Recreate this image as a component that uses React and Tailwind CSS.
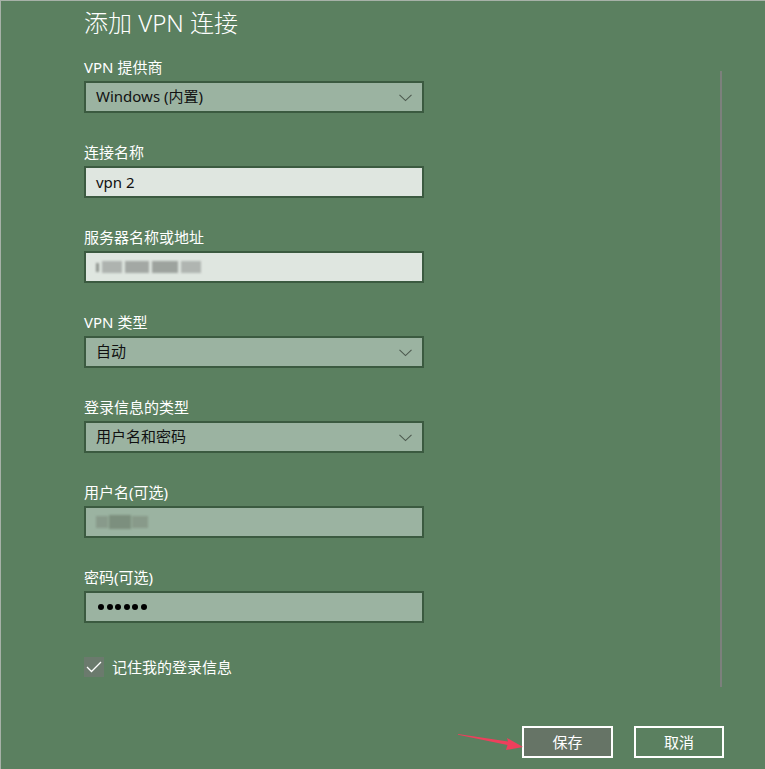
import React from "react";

const FONT = { fontFamily: '"Segoe UI", "Noto Sans", "Noto Sans CJK SC", sans-serif' };

function Chevron() {
  return (
    <svg width="13" height="8" viewBox="0 0 13 8" className="absolute right-[10px] top-[11px]">
      <polyline points="0.5,0.8 6.5,6.6 12.5,0.8" fill="none" stroke="#4d5a4f" strokeWidth="1.1" />
    </svg>
  );
}

function Field({ label, children, first }) {
  return (
    <div className={first ? "" : "mt-[30px]"}>
      <div className="h-5 leading-[18px] text-[15px] text-white">{label}</div>
      <div className="mt-[3px]">{children}</div>
    </div>
  );
}

function Select({ value }) {
  return (
    <div className="relative h-[32px] w-[340px] border-2 border-[#3b5a40] bg-[#9bb3a1] pl-[10px] text-[15px] leading-[27px] text-[#111]">
      {value}
      <Chevron />
    </div>
  );
}

function Input({ children, light }) {
  return (
    <div
      className={
        "relative flex h-[32px] w-[340px] items-center border-2 border-[#3b5a40] pl-[10px] text-[15px] leading-[27px] text-[#111] " +
        (light ? "bg-[#dfe6e0]" : "bg-[#9bb3a1]")
      }
    >
      {children}
    </div>
  );
}

export default function App() {
  return (
    <div
      style={FONT}
      className="relative h-[769px] w-[765px] overflow-hidden border-l border-t border-[#a7b1a8] bg-[#5b8060]"
    >
      <div className="pl-[83px] pt-[6px]">
        <div className="h-[32px] text-[24px] font-light leading-[31px] text-white">添加 VPN 连接</div>
        <div className="mt-[19px]">
          <Field label="VPN 提供商" first>
            <Select value="Windows (内置)" />
          </Field>
          <Field label="连接名称">
            <Input light>vpn 2</Input>
          </Field>
          <Field label="服务器名称或地址">
            <Input light>
              <div className="flex items-center gap-[3px] blur-[1.2px]">
                <div className="h-[9px] w-[3px] bg-[#8f948f]" />
                <div className="h-[12px] w-[20px] bg-[#aeb3af]" />
                <div className="h-[12px] w-[24px] bg-[#a3a8a4]" />
                <div className="h-[12px] w-[26px] bg-[#9da39e]" />
                <div className="h-[12px] w-[20px] bg-[#b0b5b1]" />
              </div>
            </Input>
          </Field>
          <Field label="VPN 类型">
            <Select value="自动" />
          </Field>
          <Field label="登录信息的类型">
            <Select value="用户名和密码" />
          </Field>
          <Field label="用户名(可选)">
            <Input>
              <div className="flex items-center gap-[1px] blur-[1.2px]">
                <div className="h-[12px] w-[12px] bg-[#889a8b]" />
                <div className="h-[14px] w-[22px] bg-[#7c8f7e]" />
                <div className="h-[12px] w-[16px] bg-[#889a8a]" />
              </div>
            </Input>
          </Field>
          <Field label="密码(可选)">
            <Input>
              <div className="flex items-center gap-[2.5px] pl-[2px]">
                {[0, 1, 2, 3, 4, 5].map((i) => (
                  <span key={i} className="block h-[6px] w-[6px] rounded-full bg-black" />
                ))}
              </div>
            </Input>
          </Field>
        </div>

        <div className="mt-[34px] flex items-center gap-[8px]">
          <div className="flex h-[20px] w-[20px] items-center justify-center bg-[#6b7a6d]">
            <svg width="16" height="12" viewBox="0 0 16 12">
              <polyline points="1,6 5.5,10.5 15,1" fill="none" stroke="#ffffff" strokeWidth="1.3" />
            </svg>
          </div>
          <span className="text-[15px] leading-[19px] text-white">记住我的登录信息</span>
        </div>
      </div>

      <div className="mt-[49px] flex justify-end gap-[21px] pr-[41px]">
        <button className="h-[32px] w-[91px] border-2 border-white bg-[#667466] text-[15px] text-white">保存</button>
        <button className="h-[32px] w-[90px] border-2 border-white bg-transparent text-[15px] text-white">取消</button>
      </div>

      <div className="absolute left-[719px] top-[70px] h-[616px] w-[2px] bg-[#7c807c]" />

      <svg className="absolute left-[455px] top-[728px]" width="70" height="25" viewBox="0 0 70 25">
        <polygon points="2,5 52,12.5 51,9 67,18 50,21 51.5,16 2,5.8" fill="#ee3f5c" />
      </svg>
    </div>
  );
}
